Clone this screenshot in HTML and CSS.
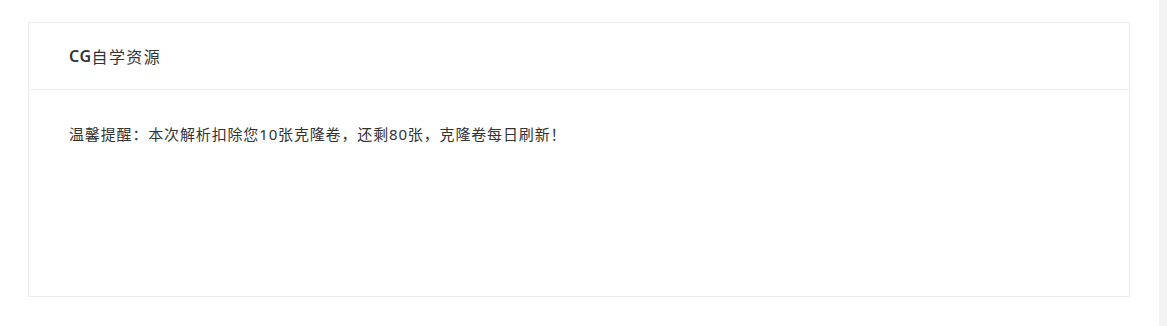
FILE: index.html
```html
<!DOCTYPE html>
<html lang="zh-CN">
<head>
  <meta charset="UTF-8">
  <title>CG自学资源</title>
  <link rel="stylesheet" href="styles.css">
</head>
<body>

  <div class="page">
    <div class="card">
      <div class="card-header"><span class="brand">CG</span>自学资源</div>
      <div class="card-body">
        <p class="notice">温馨提醒：本次解析扣除您10张克隆卷，还剩80张，克隆卷每日刷新！</p>
      </div>
    </div>
  </div>

  <div class="scrollbar"></div>

</body>
</html>
```

FILE: styles.css
```css
* {
  box-sizing: border-box;
}

html, body {
  height: 100%;
}

body {
  margin: 0;
  display: flex;
  background: #fff;
  font-family: "Noto Sans", "Noto Sans CJK SC", sans-serif;
  color: #333;
}

.page {
  flex: 1;
  padding: 22px 29px 0 28px;
}

.scrollbar {
  width: 8px;
  background: #f3f3f3;
}

.card {
  border: 1px solid #ececec;
  background: #fff;
}

.card-header {
  height: 67px;
  display: flex;
  align-items: center;
  padding: 0 40px 1px;
  border-bottom: 1px solid #ececec;
  font-size: 16px;
  letter-spacing: 1.4px;
}

.brand {
  font-weight: 600;
  letter-spacing: 0.5px;
}

.card-body {
  min-height: 206px;
  padding: 34px 40px;
}

.notice {
  margin: 0;
  font-size: 15px;
  line-height: 20px;
  letter-spacing: 0.85px;
}
```
